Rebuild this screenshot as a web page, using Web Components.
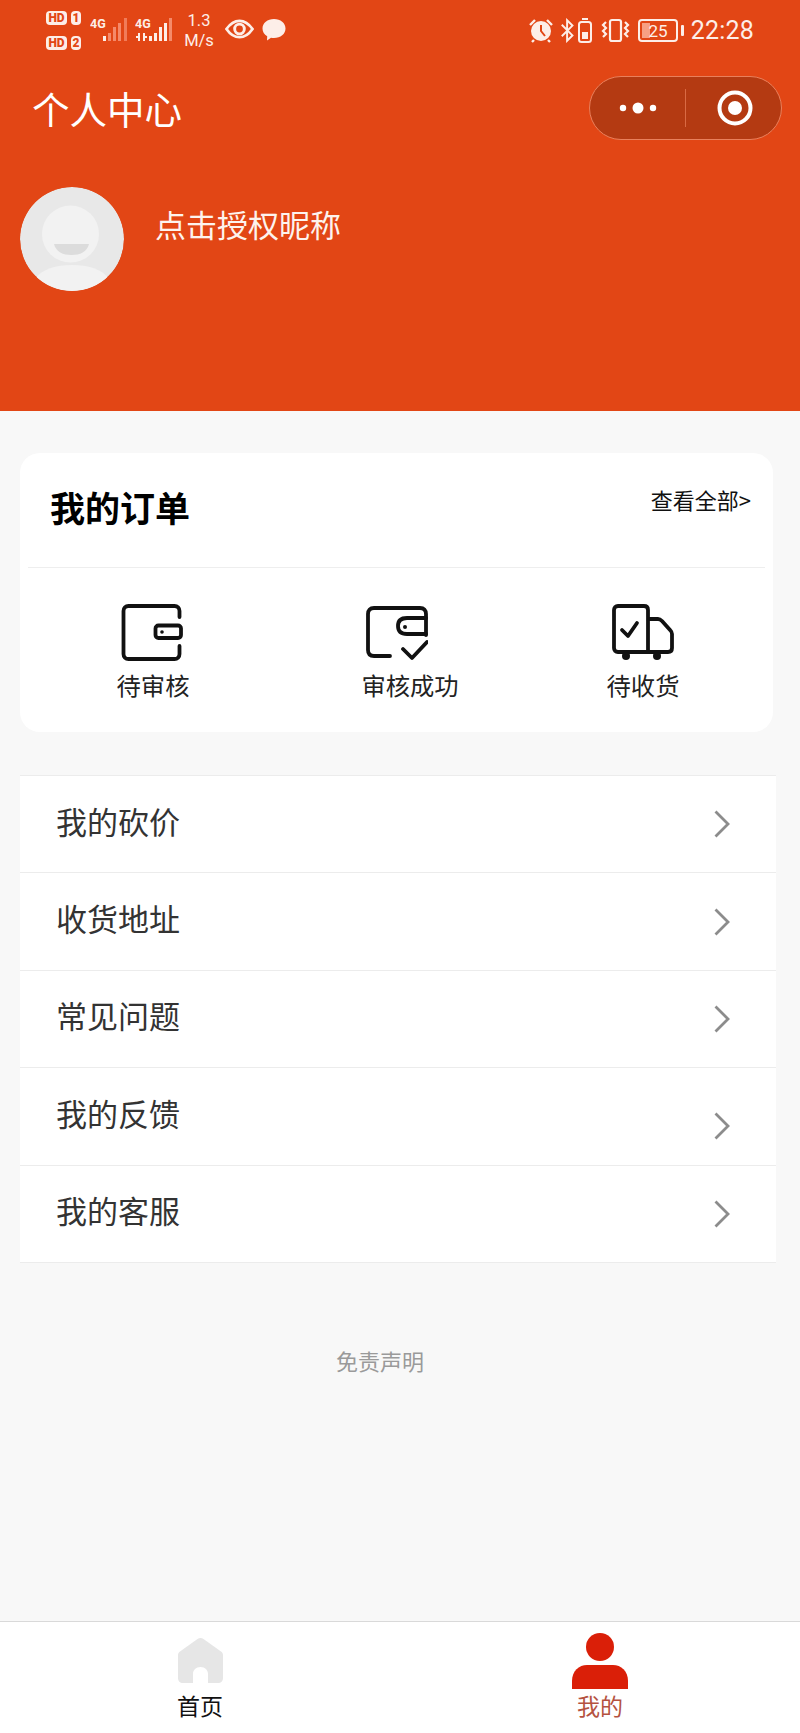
<!DOCTYPE html>
<html lang="zh">
<head>
<meta charset="utf-8">
<style>
  html, body { margin: 0; padding: 0; background: #f8f8f8; }
  body {
    width: 800px; height: 1733px; overflow: hidden;
    display: flex; flex-direction: column;
    font-family: "Noto Sans CJK SC", "Liberation Sans", sans-serif;
  }
  order-card { margin: 42px 27px 0 20px; }
  menu-list { margin: 43px 24px 0 20px; }
  .disclaimer { margin: 83px 0 0 0; padding-right: 40px; height: 28px; line-height: 28px; text-align: center; font-size: 22px; color: #9a9a9a; }
  tab-bar { margin-top: auto; }
</style>
</head>
<body>
<profile-header></profile-header>
<order-card></order-card>
<menu-list>
  <menu-row>我的砍价</menu-row>
  <menu-row>收货地址</menu-row>
  <menu-row>常见问题</menu-row>
  <menu-row nudge>我的反馈</menu-row>
  <menu-row>我的客服</menu-row>
</menu-list>
<div class="disclaimer">免责声明</div>
<tab-bar></tab-bar>

<template id="status-tpl">
  <style>
    :host { display: flex; height: 60px; align-items: center; justify-content: space-between; padding: 0 46px 0 46px; color: #fdeee8; font-family: "Roboto", "Liberation Sans", sans-serif; }
    .side { display: flex; align-items: center; }
    svg { display: block; }
    .sims { display: grid; grid-template-columns: auto auto; gap: 11px 4px; font-size: 12px; font-weight: 700; }
    .sims b { display: block; height: 14px; line-height: 14px; text-align: center; border-radius: 4px; background: #fdeee8; color: #e24615; }
    .sims b.hd { width: 21px; }
    .sims b.n { width: 10px; }
    .speed { width: 34px; margin: 2px 0 0 9px; text-align: center; font-size: 16.500px; line-height: 20px; }
    .time { margin-left: 7px; font-size: 25px; font-weight: 400; letter-spacing: .2px; }
  </style>
  <div class="side">
    <div class="sims"><b class="hd">HD</b><b class="n">1</b><b class="hd">HD</b><b class="n">2</b></div>
    <svg width="40" height="30" viewBox="0 0 40 30" style="margin-left:9px">
      <text x="0" y="13" font-size="12.500" font-weight="700" fill="#fdeee8" font-family="Roboto">4G</text>
      <rect x="13" y="21" width="3" height="5" fill="#fdeee8"/>
      <g fill="#f58a6a"><rect x="18" y="18" width="3" height="8"/><rect x="23" y="12" width="3" height="14"/><rect x="28" y="8" width="3" height="18"/><rect x="34" y="3" width="3" height="23" opacity=".8"/></g>
    </svg>
    <svg width="38" height="30" viewBox="0 0 38 30" style="margin-left:5px">
      <text x="0" y="13" font-size="12.500" font-weight="700" fill="#fdeee8" font-family="Roboto">4G</text>
      <path d="M4 18V26M1 22H4M9 18V26M9 22H12" stroke="#fdeee8" stroke-width="2" fill="none"/>
      <g fill="#fdeee8"><rect x="14" y="21" width="3" height="5"/><rect x="19" y="18" width="3" height="8"/><rect x="24" y="12" width="3" height="14"/><rect x="29" y="8" width="3" height="18"/></g>
      <rect x="34" y="3" width="3" height="23" fill="#f58a6a"/>
    </svg>
    <div class="speed">1.3<br>M/s</div>
    <svg width="29" height="20" viewBox="0 0 30 20" style="margin:-2px 0 0 9px" fill="none" stroke="#fdeee8">
      <path d="M1.500 10C6 3.500 10 1.500 15 1.500S24 3.500 28.500 10C24 16.500 20 18.500 15 18.500S6 16.500 1.500 10Z" stroke-width="2.800"/>
      <circle cx="15" cy="10" r="5" stroke-width="3"/>
    </svg>
    <svg width="24" height="23" viewBox="0 0 24 23" style="margin:-1px 0 0 8px">
      <path d="M12 1C18.500 1 23.500 5 23.500 10.500S18.500 20 12 20C11 20 10 20 9 19.700L5 22.500L5.200 18.200C2.200 16.500.5 13.800.5 10.500C.5 5 5.500 1 12 1Z" fill="#fdeee8"/>
    </svg>
  </div>
  <div class="side">
    <svg width="26" height="25" viewBox="0 0 26 25">
      <circle cx="13" cy="13" r="10" fill="#fdeee8"/>
      <path d="M13 7v6l4 5" stroke="#e24615" stroke-width="2" fill="none"/>
      <path d="M2 7L7 2M24 7L19 2M6 22l-2 2M20 22l2 2" stroke="#fdeee8" stroke-width="2.400" fill="none"/>
    </svg>
    <svg width="16" height="25" viewBox="0 0 18 25" style="margin-left:6px" fill="none" stroke="#fdeee8" stroke-width="2.200">
      <path d="M2 6L14 18L8 24V1L14 7L2 19"/>
    </svg>
    <svg width="14" height="25" viewBox="0 0 14 25" style="margin-left:2px">
      <rect x="1" y="4" width="12" height="20" rx="2.500" fill="none" stroke="#fdeee8" stroke-width="2"/>
      <rect x="4" y="0" width="6" height="2" fill="#fdeee8"/>
      <rect x="4" y="14" width="6" height="7" fill="#fdeee8"/>
    </svg>
    <svg width="29" height="25" viewBox="0 0 29 25" style="margin-left:9px" fill="none" stroke="#fdeee8" stroke-width="2.200">
      <rect x="9" y="2" width="11" height="21" rx="2"/>
      <path d="M5 4L2 7L5 10L2 13L5 16L2 19M24 4L27 7L24 10L27 13L24 16L27 19"/>
    </svg>
    <svg width="46" height="25" viewBox="0 0 46 25" style="margin-left:8px">
      <rect x="1" y="2" width="38" height="21" rx="3" fill="none" stroke="#fdeee8" stroke-width="2"/>
      <rect x="4" y="5" width="8" height="15" fill="#f7a083"/>
      <rect x="43" y="7" width="3" height="11" rx="1" fill="#fdeee8"/>
      <text x="20" y="19" text-anchor="middle" font-size="17" fill="#fdeee8" font-family="Roboto">25</text>
    </svg>
    <span class="time">22:28</span>
  </div>
</template>

<template id="header-tpl">
  <style>
    :host { display: block; height: 411px; background: #e24615; color: #fff; overflow: hidden; }
    .nav { display: flex; align-items: center; justify-content: space-between; height: 64px; margin-top: 16px; padding: 0 18px 0 32px; }
    h1 { margin: 0; font-size: 37.500px; line-height: 48px; font-weight: 400; }
    .capsule { display: flex; align-items: center; width: 193px; height: 64px; box-sizing: border-box; border-radius: 32px; background: #b43a12; border: 1px solid #e9805c; }
    .half { flex: 1; display: flex; align-items: center; justify-content: center; }
    .sep { width: 1px; height: 38px; background: #d96a44; flex: none; }
    .me { display: flex; align-items: center; margin: 47px 0 0 20px; }
    .avatar { width: 104px; height: 104px; border-radius: 50%; display: block; }
    .name { margin: 0 0 31px 31px; font-size: 31px; line-height: 40px; color: #fdf3ee; }
    svg { display: block; }
  </style>
  <status-bar></status-bar>
  <div class="nav">
    <h1>个人中心</h1>
    <div class="capsule">
      <div class="half"><svg width="38" height="14" viewBox="0 0 38 14" fill="#fff"><circle cx="4" cy="7" r="3.200"/><circle cx="19" cy="7" r="5.500"/><circle cx="34" cy="7" r="3.200"/></svg></div>
      <div class="sep"></div>
      <div class="half"><svg width="36" height="36" viewBox="0 0 36 36" style="margin-left:2px"><circle cx="18" cy="18" r="15.500" fill="none" stroke="#fff" stroke-width="4"/><circle cx="18" cy="18" r="7" fill="#fff"/></svg></div>
    </div>
  </div>
  <div class="me">
    <svg class="avatar" viewBox="0 0 104 104">
      <circle cx="52" cy="52" r="52" fill="#e8e8e8"/>
      <circle cx="50.500" cy="47" r="28.500" fill="#f2f2f2"/>
      <path d="M34 57H69C67 65 60 68 51.500 68S36 65 34 57Z" fill="#dcdcdc"/>
      <path d="M15 92C22 82 36 78 52 78S82 82 89 92C80 100 66 104 52 104S24 100 15 92Z" fill="#f2f2f2"/>
    </svg>
    <div class="name">点击授权昵称</div>
  </div>
</template>

<template id="card-tpl">
  <style>
    :host { display: block; height: 279px; background: #fff; border-radius: 20px; overflow: hidden; }
    .head { display: flex; justify-content: space-between; height: 114px; margin: 0 8px; padding: 0 14px 0 22px; border-bottom: 1px solid #eee; }
    h2 { margin: 30px 0 0; font-size: 35px; line-height: 48px; font-weight: 700; color: #000; }
    .all { margin-top: 31px; font-size: 22px; line-height: 30px; color: #111; }
    .items { display: grid; grid-template-columns: 266px 248px 218px; padding-top: 35px; }
  </style>
  <div class="head"><h2>我的订单</h2><span class="all">查看全部&gt;</span></div>
  <div class="items">
    <order-item label="待审核">
      <svg width="62" height="58" viewBox="0 0 62 58" fill="none" stroke="#111" stroke-width="3.800" stroke-linecap="round" stroke-linejoin="round" style="margin-right:3px">
        <path d="M58.500 14V8C58.500 5 56.500 3 53.500 3H7.500C4.500 3 2.500 5 2.500 8V51C2.500 54 4.500 56 7.500 56H53.500C56.500 56 58.500 54 58.500 51V43"/>
        <rect x="34.500" y="22.500" width="25.500" height="12.500" rx="3"/>
        <circle cx="41" cy="29" r="1.800" fill="#111" stroke="none"/>
      </svg>
    </order-item>
    <order-item label="审核成功">
      <svg width="62" height="58" viewBox="0 0 62 58" fill="none" stroke="#111" stroke-width="3.800" stroke-linecap="round" stroke-linejoin="round" style="margin-right:27px">
        <path d="M60 32V11Q60 5 54 5H8Q2 5 2 11V47Q2 53 8 53H24"/>
        <path d="M60 15H41Q32 15 32 23Q32 31 41 31H60"/>
        <circle cx="39" cy="24" r="2" fill="#111" stroke="none"/>
        <path d="M37 46L46 55L61 39"/>
      </svg>
    </order-item>
    <order-item label="待收货">
      <svg width="62" height="58" viewBox="0 0 62 58" fill="none" stroke="#111" stroke-width="3.800" stroke-linecap="round" stroke-linejoin="round">
        <path d="M36 49H6C3.500 49 2 47.500 2 45V7C2 4.500 3.500 3 6 3H32C34.500 3 36 4.500 36 7V49H56C58.500 49 60 47.500 60 45V31C60 29.500 59.500 28.500 58.500 27.500L50 18C49 17 48 16 46 16H36"/>
        <path d="M10 27L16 33L25 20"/>
        <circle cx="14" cy="53" r="4" fill="#111" stroke="none"/>
        <circle cx="45" cy="53" r="4" fill="#111" stroke="none"/>
      </svg>
    </order-item>
  </div>
</template>

<template id="item-tpl">
  <style>
    :host { display: flex; flex-direction: column; align-items: center; color: #222; }
    .ic { height: 60px; }
    .label { margin-top: 6px; font-size: 24.300px; line-height: 32px; }
    ::slotted(svg) { display: block; }
  </style>
  <div class="ic"><slot></slot></div>
  <div class="label"></div>
</template>

<template id="list-tpl">
  <style>
    :host { display: block; background: #fff; border-top: 1px solid #ececec; }
  </style>
  <slot></slot>
</template>

<template id="row-tpl">
  <style>
    :host { display: flex; align-items: center; justify-content: space-between; box-sizing: border-box; height: 97.400px; padding: 0 46px 0 36px; border-bottom: 1px solid #ececec; font-size: 31px; color: #333; }
    .txt { line-height: 40px; margin-bottom: 7px; }
    svg { display: block; }
    :host([nudge]) svg { margin-top: 19px; }
  </style>
  <span class="txt"><slot></slot></span>
  <svg width="16" height="28" viewBox="0 0 16 28" fill="none" stroke="#8c8c8c" stroke-width="2.800"><path d="M1.500 1.500L14 14L1.500 26.500"/></svg>
</template>

<template id="tab-tpl">
  <style>
    :host { display: flex; height: 112px; box-sizing: border-box; background: #fff; border-top: 1px solid #d9d9d9; }
    .tab { flex: 1; display: flex; flex-direction: column; align-items: center; font-size: 23px; line-height: 30px; }
    .ic { height: 68px; display: flex; align-items: flex-end; }
    svg { display: block; }
    .home { color: #111; }
    .mine { color: #b5523f; }
  </style>
  <div class="tab home">
    <div class="ic"><svg width="45" height="45" viewBox="0 0 45 45" fill="#e6e6e6" style="margin-bottom:7px"><path d="M22.500 0C23.500 0 24.500 .5 25.500 1L43 13.500C44.500 14.500 45 15.500 45 17.500V40C45 43 43 45 40 45H30V36C30 32 27 29 22.500 29S15 32 15 36V45H5C2 45 0 43 0 40V17.500C0 15.500 .5 14.500 2 13.500L19.500 1C20.500 .5 21.500 0 22.500 0Z"/></svg></div>
    <div>首页</div>
  </div>
  <div class="tab mine">
    <div class="ic"><svg width="56" height="56" viewBox="0 0 56 56" fill="#da1f08" style="margin-bottom:1px"><circle cx="28" cy="14" r="14"/><path d="M0 56V48C0 38 7 32 15 32H41C49 32 56 38 56 48V56Z"/></svg></div>
    <div>我的</div>
  </div>
</template>

<script>
function tpl(id) {
  return document.getElementById(id).content.cloneNode(true);
}
class StatusBar extends HTMLElement {
  constructor() {
    super();
    this.attachShadow({ mode: 'open' }).appendChild(tpl('status-tpl'));
  }
}
class ProfileHeader extends HTMLElement {
  constructor() {
    super();
    this.attachShadow({ mode: 'open' }).appendChild(tpl('header-tpl'));
  }
}
class OrderCard extends HTMLElement {
  constructor() {
    super();
    this.attachShadow({ mode: 'open' }).appendChild(tpl('card-tpl'));
  }
}
class OrderItem extends HTMLElement {
  constructor() {
    super();
    this.attachShadow({ mode: 'open' }).appendChild(tpl('item-tpl'));
  }
  connectedCallback() {
    this.shadowRoot.querySelector('.label').textContent = this.getAttribute('label');
  }
}
class MenuList extends HTMLElement {
  constructor() {
    super();
    this.attachShadow({ mode: 'open' }).appendChild(tpl('list-tpl'));
  }
}
class MenuRow extends HTMLElement {
  constructor() {
    super();
    this.attachShadow({ mode: 'open' }).appendChild(tpl('row-tpl'));
  }
}
class TabBar extends HTMLElement {
  constructor() {
    super();
    this.attachShadow({ mode: 'open' }).appendChild(tpl('tab-tpl'));
  }
}
customElements.define('status-bar', StatusBar);
customElements.define('profile-header', ProfileHeader);
customElements.define('order-item', OrderItem);
customElements.define('order-card', OrderCard);
customElements.define('menu-row', MenuRow);
customElements.define('menu-list', MenuList);
customElements.define('tab-bar', TabBar);
</script>
</body>
</html>
